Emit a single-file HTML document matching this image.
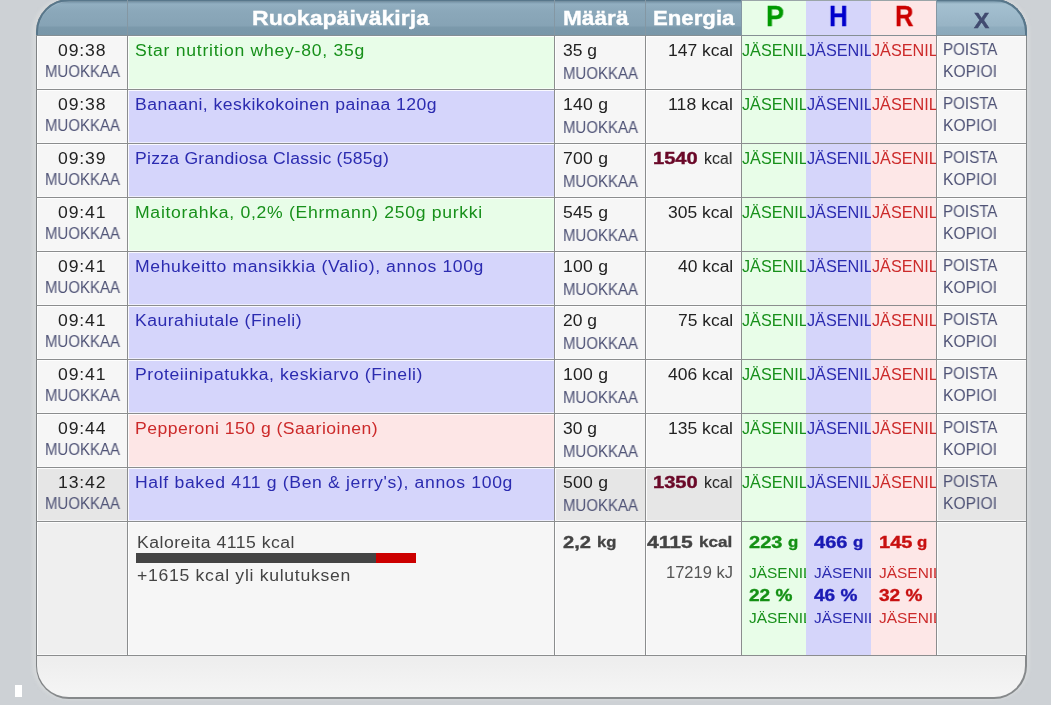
<!DOCTYPE html>
<html><head><meta charset="utf-8"><style>
html,body{margin:0;padding:0;}
body{width:1051px;height:705px;overflow:hidden;position:relative;background:#cdd1d5;font-family:"Liberation Sans",sans-serif;}
.r{position:absolute;}
.t{position:absolute;white-space:nowrap;will-change:transform;line-height:1.117em;transform-origin:0 0;}
.clip{position:absolute;overflow:hidden;}
#shadow{position:absolute;left:32px;top:-3px;width:998px;height:703px;border-radius:36px;background:#d5d8da;filter:blur(1.5px);}
#panel{position:absolute;left:36px;top:-1px;width:988px;height:696px;background:linear-gradient(#eeeeee 660px,#f4f4f4 690px);border:2px solid #86898b;border-left:1px solid #7f8284;border-radius:33px 33px 33px 33px;}
#hdr{position:absolute;left:36px;top:-1px;width:987px;height:35px;border:2px solid #58778b;border-bottom:none;border-radius:33px 33px 0 0;background:linear-gradient(#5f7e92 0px,#5f7e92 1px,#7a98ab 1px,#92afc1 3px,#8ba8ba 10px,#86a3b5 25px,#7b99ab 26px,#7896a8 35px);box-shadow:inset 0 1px 0 rgba(255,255,255,.15);}
#hdrx{position:absolute;left:937px;top:-1px;width:88px;height:35px;border:2px solid #58778b;border-left:none;border-bottom:none;border-radius:0 33px 0 0;background:linear-gradient(#6a889b 0px,#86a4b6 1px,#a4c0d0 3px,#9fbbcc 12px,#98b4c5 25px,#8eacbe 26px,#8aa8ba 35px);}
</style></head><body>
<div id="shadow"></div>
<div id="panel"></div>
<div id="hdr"></div><div id="hdrx"></div>
<div class=r style="left:37px;top:36px;width:90px;height:53px;background:#f6f6f6;box-shadow:inset 1px 1px 0 rgba(255,255,255,.85), inset 0 -1px 0 rgba(255,255,255,.6);"></div><div class=r style="left:128px;top:36px;width:426px;height:53px;background:#e8fde8;box-shadow:inset 1px 1px 0 rgba(255,255,255,.85), inset 0 -1px 0 rgba(255,255,255,.6);"></div><div class=r style="left:555px;top:36px;width:90px;height:53px;background:#f6f6f6;box-shadow:inset 1px 1px 0 rgba(255,255,255,.85), inset 0 -1px 0 rgba(255,255,255,.6);"></div><div class=r style="left:646px;top:36px;width:95px;height:53px;background:#f6f6f6;box-shadow:inset 1px 1px 0 rgba(255,255,255,.85), inset 0 -1px 0 rgba(255,255,255,.6);"></div><div class=r style="left:937px;top:36px;width:89px;height:53px;background:#f6f6f6;box-shadow:inset 1px 1px 0 rgba(255,255,255,.85), inset 0 -1px 0 rgba(255,255,255,.6);"></div><div class=r style="left:37px;top:90px;width:90px;height:53px;background:#f6f6f6;box-shadow:inset 1px 1px 0 rgba(255,255,255,.85), inset 0 -1px 0 rgba(255,255,255,.6);"></div><div class=r style="left:128px;top:90px;width:426px;height:53px;background:#d5d5fb;box-shadow:inset 1px 1px 0 rgba(255,255,255,.85), inset 0 -1px 0 rgba(255,255,255,.6);"></div><div class=r style="left:555px;top:90px;width:90px;height:53px;background:#f6f6f6;box-shadow:inset 1px 1px 0 rgba(255,255,255,.85), inset 0 -1px 0 rgba(255,255,255,.6);"></div><div class=r style="left:646px;top:90px;width:95px;height:53px;background:#f6f6f6;box-shadow:inset 1px 1px 0 rgba(255,255,255,.85), inset 0 -1px 0 rgba(255,255,255,.6);"></div><div class=r style="left:937px;top:90px;width:89px;height:53px;background:#f6f6f6;box-shadow:inset 1px 1px 0 rgba(255,255,255,.85), inset 0 -1px 0 rgba(255,255,255,.6);"></div><div class=r style="left:37px;top:144px;width:90px;height:53px;background:#f6f6f6;box-shadow:inset 1px 1px 0 rgba(255,255,255,.85), inset 0 -1px 0 rgba(255,255,255,.6);"></div><div class=r style="left:128px;top:144px;width:426px;height:53px;background:#d5d5fb;box-shadow:inset 1px 1px 0 rgba(255,255,255,.85), inset 0 -1px 0 rgba(255,255,255,.6);"></div><div class=r style="left:555px;top:144px;width:90px;height:53px;background:#f6f6f6;box-shadow:inset 1px 1px 0 rgba(255,255,255,.85), inset 0 -1px 0 rgba(255,255,255,.6);"></div><div class=r style="left:646px;top:144px;width:95px;height:53px;background:#f6f6f6;box-shadow:inset 1px 1px 0 rgba(255,255,255,.85), inset 0 -1px 0 rgba(255,255,255,.6);"></div><div class=r style="left:937px;top:144px;width:89px;height:53px;background:#f6f6f6;box-shadow:inset 1px 1px 0 rgba(255,255,255,.85), inset 0 -1px 0 rgba(255,255,255,.6);"></div><div class=r style="left:37px;top:198px;width:90px;height:53px;background:#f6f6f6;box-shadow:inset 1px 1px 0 rgba(255,255,255,.85), inset 0 -1px 0 rgba(255,255,255,.6);"></div><div class=r style="left:128px;top:198px;width:426px;height:53px;background:#e8fde8;box-shadow:inset 1px 1px 0 rgba(255,255,255,.85), inset 0 -1px 0 rgba(255,255,255,.6);"></div><div class=r style="left:555px;top:198px;width:90px;height:53px;background:#f6f6f6;box-shadow:inset 1px 1px 0 rgba(255,255,255,.85), inset 0 -1px 0 rgba(255,255,255,.6);"></div><div class=r style="left:646px;top:198px;width:95px;height:53px;background:#f6f6f6;box-shadow:inset 1px 1px 0 rgba(255,255,255,.85), inset 0 -1px 0 rgba(255,255,255,.6);"></div><div class=r style="left:937px;top:198px;width:89px;height:53px;background:#f6f6f6;box-shadow:inset 1px 1px 0 rgba(255,255,255,.85), inset 0 -1px 0 rgba(255,255,255,.6);"></div><div class=r style="left:37px;top:252px;width:90px;height:53px;background:#f6f6f6;box-shadow:inset 1px 1px 0 rgba(255,255,255,.85), inset 0 -1px 0 rgba(255,255,255,.6);"></div><div class=r style="left:128px;top:252px;width:426px;height:53px;background:#d5d5fb;box-shadow:inset 1px 1px 0 rgba(255,255,255,.85), inset 0 -1px 0 rgba(255,255,255,.6);"></div><div class=r style="left:555px;top:252px;width:90px;height:53px;background:#f6f6f6;box-shadow:inset 1px 1px 0 rgba(255,255,255,.85), inset 0 -1px 0 rgba(255,255,255,.6);"></div><div class=r style="left:646px;top:252px;width:95px;height:53px;background:#f6f6f6;box-shadow:inset 1px 1px 0 rgba(255,255,255,.85), inset 0 -1px 0 rgba(255,255,255,.6);"></div><div class=r style="left:937px;top:252px;width:89px;height:53px;background:#f6f6f6;box-shadow:inset 1px 1px 0 rgba(255,255,255,.85), inset 0 -1px 0 rgba(255,255,255,.6);"></div><div class=r style="left:37px;top:306px;width:90px;height:53px;background:#f6f6f6;box-shadow:inset 1px 1px 0 rgba(255,255,255,.85), inset 0 -1px 0 rgba(255,255,255,.6);"></div><div class=r style="left:128px;top:306px;width:426px;height:53px;background:#d5d5fb;box-shadow:inset 1px 1px 0 rgba(255,255,255,.85), inset 0 -1px 0 rgba(255,255,255,.6);"></div><div class=r style="left:555px;top:306px;width:90px;height:53px;background:#f6f6f6;box-shadow:inset 1px 1px 0 rgba(255,255,255,.85), inset 0 -1px 0 rgba(255,255,255,.6);"></div><div class=r style="left:646px;top:306px;width:95px;height:53px;background:#f6f6f6;box-shadow:inset 1px 1px 0 rgba(255,255,255,.85), inset 0 -1px 0 rgba(255,255,255,.6);"></div><div class=r style="left:937px;top:306px;width:89px;height:53px;background:#f6f6f6;box-shadow:inset 1px 1px 0 rgba(255,255,255,.85), inset 0 -1px 0 rgba(255,255,255,.6);"></div><div class=r style="left:37px;top:360px;width:90px;height:53px;background:#f6f6f6;box-shadow:inset 1px 1px 0 rgba(255,255,255,.85), inset 0 -1px 0 rgba(255,255,255,.6);"></div><div class=r style="left:128px;top:360px;width:426px;height:53px;background:#d5d5fb;box-shadow:inset 1px 1px 0 rgba(255,255,255,.85), inset 0 -1px 0 rgba(255,255,255,.6);"></div><div class=r style="left:555px;top:360px;width:90px;height:53px;background:#f6f6f6;box-shadow:inset 1px 1px 0 rgba(255,255,255,.85), inset 0 -1px 0 rgba(255,255,255,.6);"></div><div class=r style="left:646px;top:360px;width:95px;height:53px;background:#f6f6f6;box-shadow:inset 1px 1px 0 rgba(255,255,255,.85), inset 0 -1px 0 rgba(255,255,255,.6);"></div><div class=r style="left:937px;top:360px;width:89px;height:53px;background:#f6f6f6;box-shadow:inset 1px 1px 0 rgba(255,255,255,.85), inset 0 -1px 0 rgba(255,255,255,.6);"></div><div class=r style="left:37px;top:414px;width:90px;height:53px;background:#f6f6f6;box-shadow:inset 1px 1px 0 rgba(255,255,255,.85), inset 0 -1px 0 rgba(255,255,255,.6);"></div><div class=r style="left:128px;top:414px;width:426px;height:53px;background:#fde6e6;box-shadow:inset 1px 1px 0 rgba(255,255,255,.85), inset 0 -1px 0 rgba(255,255,255,.6);"></div><div class=r style="left:555px;top:414px;width:90px;height:53px;background:#f6f6f6;box-shadow:inset 1px 1px 0 rgba(255,255,255,.85), inset 0 -1px 0 rgba(255,255,255,.6);"></div><div class=r style="left:646px;top:414px;width:95px;height:53px;background:#f6f6f6;box-shadow:inset 1px 1px 0 rgba(255,255,255,.85), inset 0 -1px 0 rgba(255,255,255,.6);"></div><div class=r style="left:937px;top:414px;width:89px;height:53px;background:#f6f6f6;box-shadow:inset 1px 1px 0 rgba(255,255,255,.85), inset 0 -1px 0 rgba(255,255,255,.6);"></div><div class=r style="left:37px;top:468px;width:90px;height:53px;background:#e6e6e6;box-shadow:inset 1px 1px 0 rgba(255,255,255,.85), inset 0 -1px 0 rgba(255,255,255,.6);"></div><div class=r style="left:128px;top:468px;width:426px;height:53px;background:#d5d5fb;box-shadow:inset 1px 1px 0 rgba(255,255,255,.85), inset 0 -1px 0 rgba(255,255,255,.6);"></div><div class=r style="left:555px;top:468px;width:90px;height:53px;background:#e6e6e6;box-shadow:inset 1px 1px 0 rgba(255,255,255,.85), inset 0 -1px 0 rgba(255,255,255,.6);"></div><div class=r style="left:646px;top:468px;width:95px;height:53px;background:#e6e6e6;box-shadow:inset 1px 1px 0 rgba(255,255,255,.85), inset 0 -1px 0 rgba(255,255,255,.6);"></div><div class=r style="left:937px;top:468px;width:89px;height:53px;background:#e6e6e6;box-shadow:inset 1px 1px 0 rgba(255,255,255,.85), inset 0 -1px 0 rgba(255,255,255,.6);"></div><div class=r style="left:742px;top:1px;width:64px;height:654px;background:#e8fde8;"></div><div class=r style="left:806px;top:1px;width:65px;height:654px;background:#d5d5fa;"></div><div class=r style="left:871px;top:1px;width:65px;height:654px;background:#fde7e7;"></div><div class=r style="left:37px;top:522px;width:90px;height:133px;background:#efefef;box-shadow:inset 1px 1px 0 rgba(255,255,255,.85), inset 0 -1px 0 rgba(255,255,255,.6);"></div><div class=r style="left:128px;top:522px;width:426px;height:133px;background:#f6f6f6;box-shadow:inset 1px 1px 0 rgba(255,255,255,.85), inset 0 -1px 0 rgba(255,255,255,.6);"></div><div class=r style="left:555px;top:522px;width:90px;height:133px;background:#f6f6f6;box-shadow:inset 1px 1px 0 rgba(255,255,255,.85), inset 0 -1px 0 rgba(255,255,255,.6);"></div><div class=r style="left:646px;top:522px;width:95px;height:133px;background:#f6f6f6;box-shadow:inset 1px 1px 0 rgba(255,255,255,.85), inset 0 -1px 0 rgba(255,255,255,.6);"></div><div class=r style="left:937px;top:522px;width:89px;height:133px;background:#f0f0f0;box-shadow:inset 1px 1px 0 rgba(255,255,255,.85), inset 0 -1px 0 rgba(255,255,255,.6);"></div><div class=r style="left:36px;top:89px;width:990px;height:1px;background:#8b8d8e;"></div><div class=r style="left:36px;top:143px;width:990px;height:1px;background:#8b8d8e;"></div><div class=r style="left:36px;top:197px;width:990px;height:1px;background:#8b8d8e;"></div><div class=r style="left:36px;top:251px;width:990px;height:1px;background:#8b8d8e;"></div><div class=r style="left:36px;top:305px;width:990px;height:1px;background:#8b8d8e;"></div><div class=r style="left:36px;top:359px;width:990px;height:1px;background:#8b8d8e;"></div><div class=r style="left:36px;top:413px;width:990px;height:1px;background:#8b8d8e;"></div><div class=r style="left:36px;top:467px;width:990px;height:1px;background:#8b8d8e;"></div><div class=r style="left:36px;top:521px;width:990px;height:1px;background:#8b8d8e;"></div><div class=r style="left:36px;top:655px;width:990px;height:1px;background:#8b8d8e;"></div><div class=r style="left:127px;top:35px;width:1px;height:620px;background:#8b8d8e;"></div><div class=r style="left:554px;top:35px;width:1px;height:620px;background:#8b8d8e;"></div><div class=r style="left:645px;top:35px;width:1px;height:620px;background:#8b8d8e;"></div><div class=r style="left:741px;top:35px;width:1px;height:620px;background:#8b8d8e;"></div><div class=r style="left:936px;top:35px;width:1px;height:620px;background:#8b8d8e;"></div><div class=r style="left:127px;top:0px;width:1px;height:35px;background:#8497a3;"></div><div class=r style="left:554px;top:0px;width:1px;height:35px;background:#8497a3;"></div><div class=r style="left:645px;top:0px;width:1px;height:35px;background:#8497a3;"></div><div class=r style="left:741px;top:0px;width:1px;height:35px;background:#8497a3;"></div><div class=r style="left:936px;top:0px;width:1px;height:35px;background:#8497a3;"></div><div class=r style="left:742px;top:0px;width:194px;height:1px;background:#9aa5a8;"></div>
<div class=r style="left:36px;top:35px;width:990px;height:1px;background:#858f94"></div>
<span class=t style="left:252.40px;top:7.45px;font-size:20.5px;color:#fff;font-weight:700;-webkit-text-stroke:0.35px #fff;transform:scaleX(1.1256);">Ruokapäiväkirja</span><span class=t style="left:562.90px;top:7.45px;font-size:20.5px;color:#fff;font-weight:700;-webkit-text-stroke:0.35px #fff;transform:scaleX(1.1052);">Määrä</span><span class=t style="left:652.80px;top:7.45px;font-size:20.5px;color:#fff;font-weight:700;-webkit-text-stroke:0.35px #fff;transform:scaleX(1.0824);">Energia</span><span class=t style="left:765.70px;top:0.30px;font-size:29.5px;color:#009a00;font-weight:700;-webkit-text-stroke:0.3px #009a00;transform:scaleX(0.9143);">P</span><span class=t style="left:829.20px;top:0.30px;font-size:29.5px;color:#0000cc;font-weight:700;-webkit-text-stroke:0.3px #0000cc;transform:scaleX(0.8774);">H</span><span class=t style="left:895.20px;top:0.30px;font-size:29.5px;color:#cc0000;font-weight:700;-webkit-text-stroke:0.3px #cc0000;transform:scaleX(0.8680);">R</span><span class=t style="left:973.70px;top:9.09px;font-size:22px;color:#414b70;font-weight:700;-webkit-text-stroke:0.5px #414b70;transform:scaleX(1.0349);">X</span><span class=t style="left:57.85px;top:41.52px;font-size:16px;color:#222;letter-spacing:0.772px;transform:scaleX(1.1000);">09:38</span><span class=t style="left:44.50px;top:62.75px;font-size:15.75px;color:#4f5376;transform:scaleX(0.9522);">MUOKKAA</span><span class=t style="left:135.00px;top:41.52px;font-size:16px;color:#17901a;letter-spacing:0.662px;transform:scaleX(1.1000);">Star nutrition whey-80, 35g</span><span class=t style="left:563.00px;top:41.52px;font-size:16px;color:#222;transform:scaleX(1.0918);">35 g</span><span class=t style="left:563.00px;top:64.75px;font-size:15.75px;color:#4f5376;transform:scaleX(0.9522);">MUOKKAA</span><span class=t style="left:668.00px;top:41.52px;font-size:16px;color:#222;transform:scaleX(1.0907);">147 kcal</span><div class=clip style="left:741.5px;width:64.5px;top:26px;height:40px"><span class=t style="left:0.50px;top:15.75px;font-size:15.75px;color:#17901a;letter-spacing:0px;transform:scaleX(1.0300)">JÄSENILLE</span></div><div class=clip style="left:806px;width:65px;top:26px;height:40px"><span class=t style="left:1.00px;top:15.75px;font-size:15.75px;color:#2b2bb0;letter-spacing:0px;transform:scaleX(1.0300)">JÄSENILLE</span></div><div class=clip style="left:871px;width:65px;top:26px;height:40px"><span class=t style="left:1.00px;top:15.75px;font-size:15.75px;color:#cc2a2a;letter-spacing:0px;transform:scaleX(1.0300)">JÄSENILLE</span></div><span class=t style="left:943.40px;top:40.75px;font-size:15.75px;color:#4f5376;transform:scaleX(0.9610);">POISTA</span><span class=t style="left:943.40px;top:62.75px;font-size:15.75px;color:#4f5376;transform:scaleX(0.9933);">KOPIOI</span><span class=t style="left:57.85px;top:95.52px;font-size:16px;color:#222;letter-spacing:0.772px;transform:scaleX(1.1000);">09:38</span><span class=t style="left:44.50px;top:116.75px;font-size:15.75px;color:#4f5376;transform:scaleX(0.9522);">MUOKKAA</span><span class=t style="left:135.00px;top:95.52px;font-size:16px;color:#2b2bb0;letter-spacing:0.409px;transform:scaleX(1.1000);">Banaani, keskikokoinen painaa 120g</span><span class=t style="left:563.00px;top:95.52px;font-size:16px;color:#222;letter-spacing:0.245px;transform:scaleX(1.1000);">140 g</span><span class=t style="left:563.00px;top:118.75px;font-size:15.75px;color:#4f5376;transform:scaleX(0.9522);">MUOKKAA</span><span class=t style="left:668.00px;top:95.52px;font-size:16px;color:#222;letter-spacing:0.086px;transform:scaleX(1.1000);">118 kcal</span><div class=clip style="left:741.5px;width:64.5px;top:80px;height:40px"><span class=t style="left:0.50px;top:15.75px;font-size:15.75px;color:#17901a;letter-spacing:0px;transform:scaleX(1.0300)">JÄSENILLE</span></div><div class=clip style="left:806px;width:65px;top:80px;height:40px"><span class=t style="left:1.00px;top:15.75px;font-size:15.75px;color:#2b2bb0;letter-spacing:0px;transform:scaleX(1.0300)">JÄSENILLE</span></div><div class=clip style="left:871px;width:65px;top:80px;height:40px"><span class=t style="left:1.00px;top:15.75px;font-size:15.75px;color:#cc2a2a;letter-spacing:0px;transform:scaleX(1.0300)">JÄSENILLE</span></div><span class=t style="left:943.40px;top:94.75px;font-size:15.75px;color:#4f5376;transform:scaleX(0.9610);">POISTA</span><span class=t style="left:943.40px;top:116.75px;font-size:15.75px;color:#4f5376;transform:scaleX(0.9933);">KOPIOI</span><span class=t style="left:57.85px;top:149.52px;font-size:16px;color:#222;letter-spacing:0.772px;transform:scaleX(1.1000);">09:39</span><span class=t style="left:44.50px;top:170.75px;font-size:15.75px;color:#4f5376;transform:scaleX(0.9522);">MUOKKAA</span><span class=t style="left:135.00px;top:149.52px;font-size:16px;color:#2b2bb0;letter-spacing:0.227px;transform:scaleX(1.1000);">Pizza Grandiosa Classic (585g)</span><span class=t style="left:563.00px;top:149.52px;font-size:16px;color:#222;letter-spacing:0.245px;transform:scaleX(1.1000);">700 g</span><span class=t style="left:563.00px;top:172.75px;font-size:15.75px;color:#4f5376;transform:scaleX(0.9522);">MUOKKAA</span><span class=t style="left:652.50px;top:149.07px;font-size:16.5px;color:#6a0828;font-weight:700;-webkit-text-stroke:0.4px #6a0828;transform:scaleX(1.2174);">1540</span><span class=t style="left:704.40px;top:149.52px;font-size:16px;color:#222;transform:scaleX(0.9911);">kcal</span><div class=clip style="left:741.5px;width:64.5px;top:134px;height:40px"><span class=t style="left:0.50px;top:15.75px;font-size:15.75px;color:#17901a;letter-spacing:0px;transform:scaleX(1.0300)">JÄSENILLE</span></div><div class=clip style="left:806px;width:65px;top:134px;height:40px"><span class=t style="left:1.00px;top:15.75px;font-size:15.75px;color:#2b2bb0;letter-spacing:0px;transform:scaleX(1.0300)">JÄSENILLE</span></div><div class=clip style="left:871px;width:65px;top:134px;height:40px"><span class=t style="left:1.00px;top:15.75px;font-size:15.75px;color:#cc2a2a;letter-spacing:0px;transform:scaleX(1.0300)">JÄSENILLE</span></div><span class=t style="left:943.40px;top:148.75px;font-size:15.75px;color:#4f5376;transform:scaleX(0.9610);">POISTA</span><span class=t style="left:943.40px;top:170.75px;font-size:15.75px;color:#4f5376;transform:scaleX(0.9933);">KOPIOI</span><span class=t style="left:57.85px;top:203.52px;font-size:16px;color:#222;letter-spacing:0.772px;transform:scaleX(1.1000);">09:41</span><span class=t style="left:44.50px;top:224.75px;font-size:15.75px;color:#4f5376;transform:scaleX(0.9522);">MUOKKAA</span><span class=t style="left:135.00px;top:203.52px;font-size:16px;color:#17901a;letter-spacing:0.649px;transform:scaleX(1.1000);">Maitorahka, 0,2% (Ehrmann) 250g purkki</span><span class=t style="left:563.00px;top:203.52px;font-size:16px;color:#222;letter-spacing:0.245px;transform:scaleX(1.1000);">545 g</span><span class=t style="left:563.00px;top:226.75px;font-size:15.75px;color:#4f5376;transform:scaleX(0.9522);">MUOKKAA</span><span class=t style="left:668.00px;top:203.52px;font-size:16px;color:#222;transform:scaleX(1.0907);">305 kcal</span><div class=clip style="left:741.5px;width:64.5px;top:188px;height:40px"><span class=t style="left:0.50px;top:15.75px;font-size:15.75px;color:#17901a;letter-spacing:0px;transform:scaleX(1.0300)">JÄSENILLE</span></div><div class=clip style="left:806px;width:65px;top:188px;height:40px"><span class=t style="left:1.00px;top:15.75px;font-size:15.75px;color:#2b2bb0;letter-spacing:0px;transform:scaleX(1.0300)">JÄSENILLE</span></div><div class=clip style="left:871px;width:65px;top:188px;height:40px"><span class=t style="left:1.00px;top:15.75px;font-size:15.75px;color:#cc2a2a;letter-spacing:0px;transform:scaleX(1.0300)">JÄSENILLE</span></div><span class=t style="left:943.40px;top:202.75px;font-size:15.75px;color:#4f5376;transform:scaleX(0.9610);">POISTA</span><span class=t style="left:943.40px;top:224.75px;font-size:15.75px;color:#4f5376;transform:scaleX(0.9933);">KOPIOI</span><span class=t style="left:57.85px;top:257.52px;font-size:16px;color:#222;letter-spacing:0.772px;transform:scaleX(1.1000);">09:41</span><span class=t style="left:44.50px;top:278.75px;font-size:15.75px;color:#4f5376;transform:scaleX(0.9522);">MUOKKAA</span><span class=t style="left:135.00px;top:257.52px;font-size:16px;color:#2b2bb0;letter-spacing:0.535px;transform:scaleX(1.1000);">Mehukeitto mansikkia (Valio), annos 100g</span><span class=t style="left:563.00px;top:257.52px;font-size:16px;color:#222;letter-spacing:0.245px;transform:scaleX(1.1000);">100 g</span><span class=t style="left:563.00px;top:280.75px;font-size:15.75px;color:#4f5376;transform:scaleX(0.9522);">MUOKKAA</span><span class=t style="left:677.80px;top:257.52px;font-size:16px;color:#222;transform:scaleX(1.0887);">40 kcal</span><div class=clip style="left:741.5px;width:64.5px;top:242px;height:40px"><span class=t style="left:0.50px;top:15.75px;font-size:15.75px;color:#17901a;letter-spacing:0px;transform:scaleX(1.0300)">JÄSENILLE</span></div><div class=clip style="left:806px;width:65px;top:242px;height:40px"><span class=t style="left:1.00px;top:15.75px;font-size:15.75px;color:#2b2bb0;letter-spacing:0px;transform:scaleX(1.0300)">JÄSENILLE</span></div><div class=clip style="left:871px;width:65px;top:242px;height:40px"><span class=t style="left:1.00px;top:15.75px;font-size:15.75px;color:#cc2a2a;letter-spacing:0px;transform:scaleX(1.0300)">JÄSENILLE</span></div><span class=t style="left:943.40px;top:256.75px;font-size:15.75px;color:#4f5376;transform:scaleX(0.9610);">POISTA</span><span class=t style="left:943.40px;top:278.75px;font-size:15.75px;color:#4f5376;transform:scaleX(0.9933);">KOPIOI</span><span class=t style="left:57.85px;top:311.52px;font-size:16px;color:#222;letter-spacing:0.772px;transform:scaleX(1.1000);">09:41</span><span class=t style="left:44.50px;top:332.75px;font-size:15.75px;color:#4f5376;transform:scaleX(0.9522);">MUOKKAA</span><span class=t style="left:135.00px;top:311.52px;font-size:16px;color:#2b2bb0;letter-spacing:0.411px;transform:scaleX(1.1000);">Kaurahiutale (Fineli)</span><span class=t style="left:563.00px;top:311.52px;font-size:16px;color:#222;transform:scaleX(1.0918);">20 g</span><span class=t style="left:563.00px;top:334.75px;font-size:15.75px;color:#4f5376;transform:scaleX(0.9522);">MUOKKAA</span><span class=t style="left:677.80px;top:311.52px;font-size:16px;color:#222;transform:scaleX(1.0887);">75 kcal</span><div class=clip style="left:741.5px;width:64.5px;top:296px;height:40px"><span class=t style="left:0.50px;top:15.75px;font-size:15.75px;color:#17901a;letter-spacing:0px;transform:scaleX(1.0300)">JÄSENILLE</span></div><div class=clip style="left:806px;width:65px;top:296px;height:40px"><span class=t style="left:1.00px;top:15.75px;font-size:15.75px;color:#2b2bb0;letter-spacing:0px;transform:scaleX(1.0300)">JÄSENILLE</span></div><div class=clip style="left:871px;width:65px;top:296px;height:40px"><span class=t style="left:1.00px;top:15.75px;font-size:15.75px;color:#cc2a2a;letter-spacing:0px;transform:scaleX(1.0300)">JÄSENILLE</span></div><span class=t style="left:943.40px;top:310.75px;font-size:15.75px;color:#4f5376;transform:scaleX(0.9610);">POISTA</span><span class=t style="left:943.40px;top:332.75px;font-size:15.75px;color:#4f5376;transform:scaleX(0.9933);">KOPIOI</span><span class=t style="left:57.85px;top:365.52px;font-size:16px;color:#222;letter-spacing:0.772px;transform:scaleX(1.1000);">09:41</span><span class=t style="left:44.50px;top:386.75px;font-size:15.75px;color:#4f5376;transform:scaleX(0.9522);">MUOKKAA</span><span class=t style="left:135.00px;top:365.52px;font-size:16px;color:#2b2bb0;letter-spacing:0.504px;transform:scaleX(1.1000);">Proteiinipatukka, keskiarvo (Fineli)</span><span class=t style="left:563.00px;top:365.52px;font-size:16px;color:#222;letter-spacing:0.245px;transform:scaleX(1.1000);">100 g</span><span class=t style="left:563.00px;top:388.75px;font-size:15.75px;color:#4f5376;transform:scaleX(0.9522);">MUOKKAA</span><span class=t style="left:668.00px;top:365.52px;font-size:16px;color:#222;transform:scaleX(1.0907);">406 kcal</span><div class=clip style="left:741.5px;width:64.5px;top:350px;height:40px"><span class=t style="left:0.50px;top:15.75px;font-size:15.75px;color:#17901a;letter-spacing:0px;transform:scaleX(1.0300)">JÄSENILLE</span></div><div class=clip style="left:806px;width:65px;top:350px;height:40px"><span class=t style="left:1.00px;top:15.75px;font-size:15.75px;color:#2b2bb0;letter-spacing:0px;transform:scaleX(1.0300)">JÄSENILLE</span></div><div class=clip style="left:871px;width:65px;top:350px;height:40px"><span class=t style="left:1.00px;top:15.75px;font-size:15.75px;color:#cc2a2a;letter-spacing:0px;transform:scaleX(1.0300)">JÄSENILLE</span></div><span class=t style="left:943.40px;top:364.75px;font-size:15.75px;color:#4f5376;transform:scaleX(0.9610);">POISTA</span><span class=t style="left:943.40px;top:386.75px;font-size:15.75px;color:#4f5376;transform:scaleX(0.9933);">KOPIOI</span><span class=t style="left:57.85px;top:419.52px;font-size:16px;color:#222;letter-spacing:0.772px;transform:scaleX(1.1000);">09:44</span><span class=t style="left:44.50px;top:440.75px;font-size:15.75px;color:#4f5376;transform:scaleX(0.9522);">MUOKKAA</span><span class=t style="left:135.00px;top:419.52px;font-size:16px;color:#cc2a2a;letter-spacing:0.424px;transform:scaleX(1.1000);">Pepperoni 150 g (Saarioinen)</span><span class=t style="left:563.00px;top:419.52px;font-size:16px;color:#222;transform:scaleX(1.0918);">30 g</span><span class=t style="left:563.00px;top:442.75px;font-size:15.75px;color:#4f5376;transform:scaleX(0.9522);">MUOKKAA</span><span class=t style="left:668.00px;top:419.52px;font-size:16px;color:#222;transform:scaleX(1.0907);">135 kcal</span><div class=clip style="left:741.5px;width:64.5px;top:404px;height:40px"><span class=t style="left:0.50px;top:15.75px;font-size:15.75px;color:#17901a;letter-spacing:0px;transform:scaleX(1.0300)">JÄSENILLE</span></div><div class=clip style="left:806px;width:65px;top:404px;height:40px"><span class=t style="left:1.00px;top:15.75px;font-size:15.75px;color:#2b2bb0;letter-spacing:0px;transform:scaleX(1.0300)">JÄSENILLE</span></div><div class=clip style="left:871px;width:65px;top:404px;height:40px"><span class=t style="left:1.00px;top:15.75px;font-size:15.75px;color:#cc2a2a;letter-spacing:0px;transform:scaleX(1.0300)">JÄSENILLE</span></div><span class=t style="left:943.40px;top:418.75px;font-size:15.75px;color:#4f5376;transform:scaleX(0.9610);">POISTA</span><span class=t style="left:943.40px;top:440.75px;font-size:15.75px;color:#4f5376;transform:scaleX(0.9933);">KOPIOI</span><span class=t style="left:57.85px;top:473.52px;font-size:16px;color:#222;letter-spacing:0.772px;transform:scaleX(1.1000);">13:42</span><span class=t style="left:44.50px;top:494.75px;font-size:15.75px;color:#4f5376;transform:scaleX(0.9522);">MUOKKAA</span><span class=t style="left:135.00px;top:473.52px;font-size:16px;color:#2b2bb0;letter-spacing:0.592px;transform:scaleX(1.1000);">Half baked 411 g (Ben &amp; jerry's), annos 100g</span><span class=t style="left:563.00px;top:473.52px;font-size:16px;color:#222;letter-spacing:0.245px;transform:scaleX(1.1000);">500 g</span><span class=t style="left:563.00px;top:496.75px;font-size:15.75px;color:#4f5376;transform:scaleX(0.9522);">MUOKKAA</span><span class=t style="left:652.50px;top:473.07px;font-size:16.5px;color:#6a0828;font-weight:700;-webkit-text-stroke:0.4px #6a0828;transform:scaleX(1.2174);">1350</span><span class=t style="left:704.40px;top:473.52px;font-size:16px;color:#222;transform:scaleX(0.9911);">kcal</span><div class=clip style="left:741.5px;width:64.5px;top:458px;height:40px"><span class=t style="left:0.50px;top:15.75px;font-size:15.75px;color:#17901a;letter-spacing:0px;transform:scaleX(1.0300)">JÄSENILLE</span></div><div class=clip style="left:806px;width:65px;top:458px;height:40px"><span class=t style="left:1.00px;top:15.75px;font-size:15.75px;color:#2b2bb0;letter-spacing:0px;transform:scaleX(1.0300)">JÄSENILLE</span></div><div class=clip style="left:871px;width:65px;top:458px;height:40px"><span class=t style="left:1.00px;top:15.75px;font-size:15.75px;color:#cc2a2a;letter-spacing:0px;transform:scaleX(1.0300)">JÄSENILLE</span></div><span class=t style="left:943.40px;top:472.75px;font-size:15.75px;color:#4f5376;transform:scaleX(0.9610);">POISTA</span><span class=t style="left:943.40px;top:494.75px;font-size:15.75px;color:#4f5376;transform:scaleX(0.9933);">KOPIOI</span><span class=t style="left:136.70px;top:533.52px;font-size:16px;color:#444;letter-spacing:0.459px;transform:scaleX(1.1000);">Kaloreita 4115 kcal</span><span class=t style="left:136.70px;top:566.52px;font-size:16px;color:#444;letter-spacing:0.649px;transform:scaleX(1.1000);">+1615 kcal yli kulutuksen</span><span class=t style="left:562.90px;top:533.07px;font-size:16.5px;color:#444;font-weight:700;-webkit-text-stroke:0.35px #444;transform:scaleX(1.2207);">2,2</span><span class=t style="left:597.20px;top:534.42px;font-size:15px;color:#444;font-weight:700;-webkit-text-stroke:0.3px #444;transform:scaleX(1.1076);">kg</span><span class=t style="left:647.40px;top:533.07px;font-size:16.5px;color:#444;font-weight:700;-webkit-text-stroke:0.35px #444;transform:scaleX(1.2766);">4115</span><span class=t style="left:699.40px;top:534.42px;font-size:15px;color:#444;font-weight:700;-webkit-text-stroke:0.3px #444;transform:scaleX(1.1403);">kcal</span><span class=t style="left:665.70px;top:563.52px;font-size:16px;color:#555;transform:scaleX(1.0318);">17219 kJ</span><span class=t style="left:749.00px;top:533.07px;font-size:16.5px;color:#149014;font-weight:700;-webkit-text-stroke:0.35px #149014;transform:scaleX(1.2132);">223</span><span class=t style="left:788.00px;top:534.42px;font-size:15px;color:#149014;font-weight:700;-webkit-text-stroke:0.3px #149014;transform:scaleX(1.1230);">g</span><span class=t style="left:813.50px;top:533.07px;font-size:16.5px;color:#1a1ab4;font-weight:700;-webkit-text-stroke:0.35px #1a1ab4;transform:scaleX(1.2132);">466</span><span class=t style="left:852.90px;top:534.42px;font-size:15px;color:#1a1ab4;font-weight:700;-webkit-text-stroke:0.3px #1a1ab4;transform:scaleX(1.1230);">g</span><span class=t style="left:878.50px;top:533.07px;font-size:16.5px;color:#c81010;font-weight:700;-webkit-text-stroke:0.35px #c81010;transform:scaleX(1.2132);">145</span><span class=t style="left:917.40px;top:534.42px;font-size:15px;color:#c81010;font-weight:700;-webkit-text-stroke:0.3px #c81010;transform:scaleX(1.1230);">g</span><span class=t style="left:749.00px;top:586.52px;font-size:16px;color:#149014;font-weight:700;-webkit-text-stroke:0.35px #149014;transform:scaleX(1.1901);">22 %</span><span class=t style="left:813.60px;top:586.52px;font-size:16px;color:#1a1ab4;font-weight:700;-webkit-text-stroke:0.35px #1a1ab4;transform:scaleX(1.1901);">46 %</span><span class=t style="left:878.50px;top:586.52px;font-size:16px;color:#c81010;font-weight:700;-webkit-text-stroke:0.35px #c81010;transform:scaleX(1.1901);">32 %</span><div class=clip style="left:741px;width:65px;top:549px;height:40px"><span class=t style="left:8.00px;top:16.42px;font-size:15.01px;color:#17901a;letter-spacing:0px;transform:scaleX(1.0300)">JÄSENILLE</span></div><div class=clip style="left:806px;width:65px;top:549px;height:40px"><span class=t style="left:8.00px;top:16.42px;font-size:15.01px;color:#2b2bb0;letter-spacing:0px;transform:scaleX(1.0300)">JÄSENILLE</span></div><div class=clip style="left:871px;width:65px;top:549px;height:40px"><span class=t style="left:8.00px;top:16.42px;font-size:15.01px;color:#cc2a2a;letter-spacing:0px;transform:scaleX(1.0300)">JÄSENILLE</span></div><div class=clip style="left:741px;width:65px;top:594px;height:40px"><span class=t style="left:8.00px;top:16.42px;font-size:15.01px;color:#17901a;letter-spacing:0px;transform:scaleX(1.0300)">JÄSENILLE</span></div><div class=clip style="left:806px;width:65px;top:594px;height:40px"><span class=t style="left:8.00px;top:16.42px;font-size:15.01px;color:#2b2bb0;letter-spacing:0px;transform:scaleX(1.0300)">JÄSENILLE</span></div><div class=clip style="left:871px;width:65px;top:594px;height:40px"><span class=t style="left:8.00px;top:16.42px;font-size:15.01px;color:#cc2a2a;letter-spacing:0px;transform:scaleX(1.0300)">JÄSENILLE</span></div>
<div class=r style="left:136px;top:553px;width:240px;height:10px;background:#444"></div>
<div class=r style="left:376px;top:553px;width:40px;height:10px;background:#cc0000"></div>
<div class=r style="left:15px;top:685px;width:7px;height:12px;background:#fff"></div>
</body></html>
